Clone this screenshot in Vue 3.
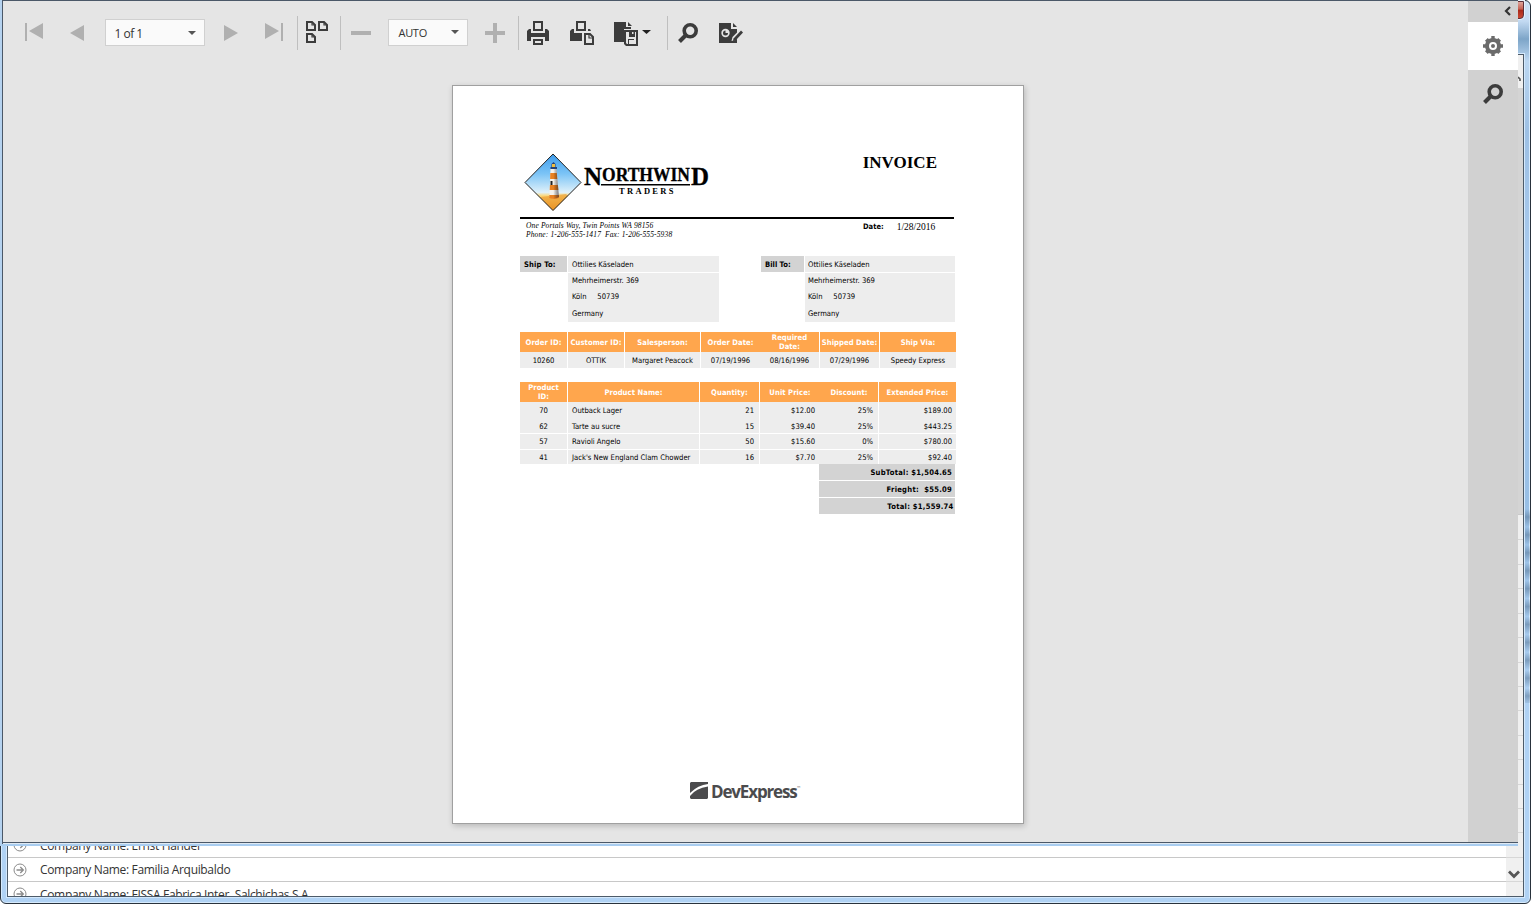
<script setup>
const customer = ['Ottilies Käseladen', 'Mehrheimerstr. 369', 'Köln     50739', 'Germany']
const parties = [
  { label: 'Ship To:', kind: 'ship' },
  { label: 'Bill To:', kind: 'bill' },
]
const orderFields = [
  { head: 'Order ID:', value: '10260' },
  { head: 'Customer ID:', value: 'OTTIK' },
  { head: 'Salesperson:', value: 'Margaret Peacock' },
  { head: 'Order Date:', value: '07/19/1996' },
  { head: 'Required Date:', value: '08/16/1996' },
  { head: 'Shipped Date:', value: '07/29/1996' },
  { head: 'Ship Via:', value: 'Speedy Express' },
]
const productHeads = ['Product ID:', 'Product Name:', 'Quantity:', 'Unit Price:', 'Discount:', 'Extended Price:']
const products = [
  ['70', 'Outback Lager', '21', '$12.00', '25%', '$189.00'],
  ['62', 'Tarte au sucre', '15', '$39.40', '25%', '$443.25'],
  ['57', 'Ravioli Angelo', '50', '$15.60', '0%', '$780.00'],
  ['41', "Jack's New England Clam Chowder", '16', '$7.70', '25%', '$92.40'],
]
const totals = ['SubTotal: $1,504.65', 'Frieght:  $55.09', 'Total: $1,559.74']
const companies = [...Array(13).fill(''), 'Ernst Handel', 'Familia Arquibaldo', 'FISSA Fabrica Inter. Salchichas S.A.']
</script>

<template>
  <div class="desktop">
    <div class="back">
      <div class="close-btn"></div>
      <div class="back-body">
        <div class="thumb"></div>
        <div class="companies">
          <div v-for="(c, i) in companies" :key="i" class="company">
            <template v-if="c">
              <svg width="14" height="14" viewBox="0 0 14 14" fill="none" stroke="#8b8b8b">
                <circle cx="7" cy="7" r="6" /><path d="M3.5 7h6.5M7.3 4l3 3-3 3" stroke-width="1.3" />
              </svg>
              <span>Company Name: {{ c }}</span>
            </template>
          </div>
        </div>
        <div class="scroll-track"></div>
        <svg class="scroll-up" width="5" height="8" viewBox="0 0 5 8"><path d="M0 2l2 2v2" fill="none" stroke="#555" stroke-width="1.6" /></svg>
        <svg class="scroll-down" width="12" height="9" viewBox="0 0 12 9"><path d="M1 1.5l5 5 5-5" fill="none" stroke="#555" stroke-width="2.8" /></svg>
      </div>
      <div class="glass-marks"></div>
    </div>

    <div class="viewer">
      <main class="main">
        <div class="toolbar">
          <svg class="t-first" width="18" height="18" viewBox="0 0 18 18" fill="#b0b0b0"><path d="M0 0h2v18H0zM18 0v16L4 8z" /></svg>
          <svg class="t-prev" width="14" height="16" viewBox="0 0 14 16" fill="#b0b0b0"><path d="M14 0v16L0 8z" /></svg>
          <div class="select pages">1 of 1<i></i></div>
          <svg class="t-next" width="14" height="16" viewBox="0 0 14 16" fill="#b0b0b0"><path d="M0 0v16l14-8z" /></svg>
          <svg class="t-last" width="18" height="18" viewBox="0 0 18 18" fill="#b0b0b0"><path d="M16 0h2v18h-2zM0 0v16l14-8z" /></svg>
          <div class="sep s1"></div>
          <svg class="t-multi" width="22" height="22" viewBox="0 0 22 22" fill="none" stroke="#3c3c3c" stroke-width="2">
            <path d="M1 1h5l3 3v5H1zM13 1h5l3 3v5h-8zM1 13h5l3 3v5H1z" /><path d="M6 1v3h3M18 1v3h3M6 13v3h3" stroke-width="1.2" />
          </svg>
          <div class="sep s2"></div>
          <svg class="t-minus" width="20" height="4" viewBox="0 0 20 4"><path d="M0 0h20v4H0z" fill="#b0b0b0" /></svg>
          <div class="select zoom">AUTO<i></i></div>
          <svg class="t-plus" width="20" height="20" viewBox="0 0 20 20"><path d="M8 0h4v8h8v4h-8v8H8v-8H0V8h8z" fill="#b0b0b0" /></svg>
          <div class="sep s3"></div>
          <svg class="t-print" width="22" height="24" viewBox="0 0 22 24">
            <path d="M7 1h8v8H7z" fill="none" stroke="#3c3c3c" stroke-width="2" />
            <path d="M0 10l2-2h2v4h14V8h2l2 2v10h-4v-4H4v4H0z" fill="#3c3c3c" />
            <path d="M7 19h8v4H7z" fill="none" stroke="#3c3c3c" stroke-width="2" />
          </svg>
          <svg class="t-printpage" width="24" height="24" viewBox="0 0 24 24">
            <path d="M7 1h8v8H7z" fill="none" stroke="#3c3c3c" stroke-width="2" />
            <path d="M0 10l2-2h2v4h8v8H0zM18 8h2l1 2h-3z" fill="#3c3c3c" />
            <path d="M15 13h5l3 3v7h-8z" fill="none" stroke="#3c3c3c" stroke-width="2" /><path d="M19 13v4h4" fill="none" stroke="#3c3c3c" stroke-width="1.2" />
          </svg>
          <svg class="t-export" width="37" height="24" viewBox="0 0 37 24">
            <path d="M0 0h12v5h5v2h-7v13H0zM14 0l4 4h-4z" fill="#3c3c3c" />
            <path d="M11 9v12l2 2h10V9h-2v5h-7V9z" fill="#e5e5e5" />
            <path d="M10 8h14v16H12l-2-2zM12 10v11l1 1h1v-5h6v5h2V10h-1v5h-6v-5zM15 18v4h5v-4z" fill="#3c3c3c" fill-rule="evenodd" />
            <path d="M16 10h4v3h-4z" fill="#3c3c3c" /><path d="M18 10h1.500v2H18z" fill="#e5e5e5" />
            <path d="M28 8h9l-4.5 4z" fill="#222" />
          </svg>
          <div class="sep s4"></div>
          <svg class="t-search" width="20" height="20" viewBox="0 0 20 20" fill="none" stroke="#3c3c3c">
            <circle cx="12.2" cy="7.8" r="6" stroke-width="3.6" /><path d="M8 12l-6.5 6.5" stroke-width="4" />
          </svg>
          <svg class="t-edit" width="25" height="20" viewBox="0 0 25 20">
            <path d="M0 0h12v6h6v14H0z" fill="#3c3c3c" /><path d="M14 0l4 4h-4z" fill="#3c3c3c" />
            <circle cx="6.500" cy="10" r="4.200" fill="#e5e5e5" /><path d="M6.500 7.500v2.500H9a2.500 2.500 0 1 1-2.500-2.500z" fill="#3c3c3c" />
            <path d="M12.500 18l1-4 8-8 3 3-8 8z" fill="#e5e5e5" /><path d="M14.500 15.500l7.500-8 2 2-7.500 8-2.500.5z" fill="#3c3c3c" />
          </svg>
        </div>

        <div class="paper">
          <div class="letterhead">
            <svg class="logo" width="190" height="60" viewBox="0 0 190 60">
              <defs>
                <linearGradient id="sky" x1="0" y1="0" x2="0" y2="1">
                  <stop offset="0" stop-color="#3d9cec" /><stop offset=".35" stop-color="#7cc4f6" /><stop offset=".68" stop-color="#dff1fa" />
                  <stop offset=".74" stop-color="#fbd87a" /><stop offset="1" stop-color="#e88a1c" />
                </linearGradient>
                <linearGradient id="shade"><stop offset=".4" stop-color="#000" stop-opacity="0" /><stop offset="1" stop-color="#223" stop-opacity=".6" /></linearGradient>
              </defs>
              <path d="M29 1l28 28.500-28 28L1 29.500z" fill="url(#sky)" />
              <path d="M16 44l26-3 2 2-15 14.500z" fill="#e99829" opacity=".6" />
              <path d="M26.500 16h6l2.500 28q-5 3-9.500 0z" fill="#f5f3ed" />
              <path d="M26.300 20h6.500l.5 6h-7.200zM25.900 32h8l.5 5h-8.700zM25.300 42h9.700v3q-5 2-9.700 0z" fill="#e98222" />
              <path d="M26.500 16h6l2.500 28q-5 3-9.500 0z" fill="url(#shade)" />
              <path d="M26.500 16v-2h1v-3l2-2 2 2v3h1.500v2z" fill="#24427a" /><path d="M28 11h3v3h-3z" fill="#f1bd3d" />
              <path d="M26.500 28h2v4h-2z" fill="#222" />
              <path d="M29 1l28 28.500-28 28L1 29.500z" fill="none" stroke="#222" />
              <g font-family="Liberation Serif, serif" font-weight="700" stroke="#000" stroke-width=".3">
                <text x="60" y="32" font-size="25" textLength="18" lengthAdjust="spacingAndGlyphs">N</text>
                <text x="78" y="28" font-size="19" textLength="88" lengthAdjust="spacingAndGlyphs">ORTHWIN</text>
                <text x="167" y="32" font-size="25" textLength="18" lengthAdjust="spacingAndGlyphs">D</text>
              </g>
              <text x="95" y="40.500" font-family="Liberation Serif, serif" font-weight="700" font-size="8.500" textLength="54.500">TRADERS</text>
              <path d="M77 31h89v1.600H77z" />
            </svg>
            <h1>INVOICE</h1>
          </div>
          <div class="contact">
            <div class="address"><div>One Portals Way, Twin Points WA 98156</div><div>Phone: 1-206-555-1417&nbsp; Fax: 1-206-555-5938</div></div>
            <b>Date:</b><span class="date">1/28/2016</span>
          </div>
          <div class="parties">
            <div v-for="p in parties" :key="p.kind" class="party" :class="p.kind">
              <b>{{ p.label }}</b>
              <div class="lines"><div v-for="line in customer" :key="line">{{ line }}</div></div>
            </div>
          </div>
          <div class="order">
            <div v-for="f in orderFields" :key="f.head" class="field"><b>{{ f.head }}</b><span>{{ f.value }}</span></div>
          </div>
          <div class="products">
            <div class="prow phead"><div v-for="h in productHeads" :key="h"><span>{{ h }}</span></div></div>
            <div v-for="row in products" :key="row[0]" class="prow item"><div v-for="(v, i) in row" :key="i">{{ v }}</div></div>
          </div>
          <div class="totals"><div v-for="t in totals" :key="t">{{ t }}</div></div>
          <div class="brand">
            <svg width="18" height="17" viewBox="0 0 18 17" fill="#4b4b4d"><path d="M1 0h17v2Q8 3 0 11V1zM18 4.500V16l-1 1H1l-1-1v-2Q6 6 18 4.500z" /></svg>
            <span>DevExpress</span><sup>™</sup>
          </div>
        </div>
      </main>

      <aside class="side">
        <div class="collapse"><svg width="7" height="10" viewBox="0 0 7 10"><path d="M6 1L2 5l4 4" fill="none" stroke="#333" stroke-width="2.200" /></svg></div>
        <div class="tab active">
          <svg width="20" height="20" viewBox="0 0 20 20">
            <g fill="#6b6b6b"><circle cx="10" cy="10" r="8" /><path d="M8.300 0h3.400v20H8.300zM0 8.300h20v3.400H0z" /><path d="M8 .6h4v18.800H8zM.6 8h18.800v4H.6z" transform="rotate(45 10 10)" /></g>
            <circle cx="10" cy="10" r="3" fill="none" stroke="#fff" stroke-width="2" />
          </svg>
        </div>
        <div class="tab">
          <svg width="20" height="20" viewBox="0 0 20 20" fill="none" stroke="#3c3c3c"><circle cx="12.200" cy="7.800" r="6" stroke-width="3.600" /><path d="M8 12l-6.500 6.500" stroke-width="4" /></svg>
        </div>
      </aside>
    </div>
  </div>
</template>

<style>
body { margin: 0; overflow: hidden; background: #fff; }
</style>

<style scoped>
.desktop { position: relative; width: 1531px; height: 904px; overflow: hidden; font-family: "Open Sans", "Noto Sans", sans-serif; }
.desktop * { box-sizing: border-box; }
svg { display: block; flex: none; }

.back { position: absolute; inset: 0; border: 1px solid #29323c; border-radius: 6px; background: linear-gradient(#cfe2f5, #c3daf2 20px, #7da5c8 38px, #bcd7f1 60px, #9dc0e4 130px, #accdf0 300px, #98bfe5 500px, #b0d2f4 720px); box-shadow: inset 0 0 0 1px #d6eafc; }
.close-btn { position: absolute; left: 1507px; top: 0; width: 16px; height: 18px; background: linear-gradient(#e0a49b, #c56050 45%, #a92717 50%, #c94832); border: 1px solid #5d3039; border-radius: 0 0 4px 0; box-shadow: 0 0 0 1px #e9f2fb; }
.back-body { position: absolute; left: 6px; top: 53px; width: 1517px; height: 843px; border: 1px solid #4d5b69; background: #fff; overflow: hidden; box-shadow: 0 0 0 1px #d5e9fc; }
.companies { padding-top: 461px; }
.company { display: flex; align-items: center; height: 24.430px; padding: 0 0 0 5px; gap: 13px; border-bottom: 1px solid #c8c8c8; font-size: 12px; letter-spacing: -.33px; color: #333; white-space: nowrap; }
.scroll-track { position: absolute; right: 0; top: 0; width: 17px; height: 100%; background: rgba(228, 228, 228, .55); }
.thumb { position: absolute; right: 0; top: 33px; width: 17px; height: 427px; background: #c2c2c2; border-bottom: 1px solid #aaa; }
.scroll-up { position: absolute; right: 0; top: 20px; }
.scroll-down { position: absolute; right: 3px; bottom: 17px; }
.glass-marks { position: absolute; right: 0; top: 508px; width: 5px; height: 194px; background: repeating-linear-gradient(rgba(80, 110, 140, 0) 0, rgba(80, 110, 140, .5) 8px, rgba(80, 110, 140, 0) 17.900px); }

.viewer { position: absolute; left: 0; top: 0; width: 1518px; height: 846px; display: flex; border-left: 2px solid #b5d2ef; border-bottom: 2px solid #a9cdf0; background: #e5e5e5; box-shadow: inset 1px 1px #4b5868, inset 0 -1px #dfe9f2, inset 0 -2px #4b5868; padding: 1px 0 2px 1px; }
.main { flex: 1; min-width: 0; }
.side { width: 50px; background: #d1d1d1; }
.collapse { display: flex; height: 21px; align-items: center; justify-content: flex-end; padding: 0 7px 1px 0; }
.tab { display: flex; height: 48px; align-items: center; justify-content: center; }
.tab.active { background: #fff; }

.toolbar { display: flex; align-items: center; height: 64px; padding-left: 22px; }
.t-first { margin-top: -2px; }
.t-prev { margin-left: 27px; }
.t-next { margin-left: 19px; }
.t-last { margin: -2px 0 0 27px; }
.t-multi { margin: -2px 0 0 8px; }
.t-minus { margin-left: 10px; }
.t-plus { margin-left: 17px; }
.t-print { margin-left: 8px; }
.t-printpage { margin-left: 21px; }
.t-export { margin: 2px 0 0 20px; }
.t-search { margin-left: 10px; }
.t-edit { margin-left: 21px; }
.sep { width: 1px; height: 34px; background: #bfbfbf; }
.s1 { margin-left: 14px; }
.s2 { margin-left: 12px; }
.s3 { margin-left: 13px; }
.s4 { margin-left: 16px; }
.select { display: flex; align-items: center; justify-content: space-between; height: 27px; padding: 1px 8px 0 8.500px; background: #fafafa; border: 1px solid #d0d0d0; font-size: 12px; color: #333; margin-top: -1px; }
.select i { border: 4.500px solid transparent; border-top: 4px solid #555; border-bottom: 0; }
.pages { width: 100px; margin-left: 21px; letter-spacing: -.5px; }
.zoom { width: 80px; margin-left: 17px; padding: 0 8px 1px 9.500px; font-size: 11px; letter-spacing: -.3px; }

.paper { width: 572px; height: 739px; margin: 20px 0 0 449px; padding: 0 66px 0 67px; display: flex; flex-direction: column; background: #fff; border: 1px solid #a0a0a0; box-shadow: 1px 2px 6px rgba(0, 0, 0, .2); font-family: "DejaVu Sans Condensed", "DejaVu Sans", sans-serif; font-size: 7.600px; color: #000; white-space: pre; }
.letterhead { height: 133px; width: 434px; display: flex; justify-content: space-between; padding: 67px 17px 0 4px; border-bottom: 2px solid #000; flex: none; }
h1 { margin: 0; font: bold 17px/20px "Liberation Serif", serif; }
.contact { height: 37px; display: flex; flex: none; padding: 1px 0 0 6px; }
.contact b { font-size: 7.500px; line-height: 11px; padding-top: 1px; }
.address { width: 337px; font: italic 7.500px/9px "Liberation Serif", serif; letter-spacing: .13px; padding-top: 1px; }
.date { font: 9.500px/14px "Liberation Serif", serif; margin-left: 13px; }
.parties { display: flex; justify-content: space-between; width: 435px; height: 66px; flex: none; }
.party { display: flex; gap: 1px; }
.ship { width: 199px; }
.bill { width: 194px; }
.party b { width: 47px; height: 16px; background: #d3d3d3; line-height: 17px; padding-left: 4px; letter-spacing: .15px; }
.bill b { width: 43px; letter-spacing: 0; }
.lines { flex: 1; background: #ededed; line-height: 16.400px; padding-left: 4px; }
.bill .lines { padding-left: 3px; }
.lines div:first-child { height: 17px; line-height: 17px; margin-left: -4px; padding-left: 4px; border-bottom: 1px solid #fff; }
.bill .lines div:first-child { margin-left: -3px; padding-left: 3px; }
.order { display: grid; grid-template-columns: 48px 57px 76px 59px 60px 60px 76px; margin-top: 10px; flex: none; }
.field { border-right: 1px solid #fff; background: #ededed; text-align: center; height: 36px; }
.field:nth-child(4), .field:last-child, .prow > :last-child, .prow > :nth-child(4) { border-right: 0; }
.field b { display: flex; align-items: center; justify-content: center; height: 20px; background: #ffa64d; color: #fff; line-height: 9px; white-space: nowrap; letter-spacing: .05px; }
.field:nth-child(5) b { white-space: normal; padding: 0 8px; }
.field span { line-height: 17px; }
.products { margin-top: 14px; flex: none; }
.prow { display: grid; grid-template-columns: 48px 132px 60px 60px 59px 77px; }
.prow > div { border-right: 1px solid #fff; }
.phead > div { height: 20px; display: flex; align-items: center; justify-content: center; background: #ffa64d; color: #fff; font-weight: bold; line-height: 9px; white-space: normal; text-align: center; letter-spacing: .07px; }
.phead > div:first-child { padding: 0 6px; }
.item > div { height: 15.500px; line-height: 17px; background: #ededed; text-align: right; padding-right: 5px; }
.item:nth-child(n + 4) > div { border-top: 1px solid #fff; line-height: 15px; }
.item > div:first-child { text-align: center; padding: 0; }
.item > div:nth-child(2) { text-align: left; padding-left: 4px; }
.item > div:last-child { padding-right: 4px; }
.totals { width: 136px; margin-left: 299px; font-weight: bold; text-align: right; flex: none; letter-spacing: .25px; }
.totals div { height: 16px; line-height: 17px; margin-bottom: 1px; background: #d3d3d3; padding-right: 3px; }
.totals div:last-child { padding-right: 1.500px; }
.brand { display: flex; align-items: flex-start; margin: auto 0 20px 170px; height: 21px; color: #4b4b4d; }
.brand span { margin: -1px 0 0 3px; font: bold 17px/22px "Open Sans", sans-serif; letter-spacing: -1.150px; }
.brand sup { font-size: 5px; line-height: 12px; }
</style>
